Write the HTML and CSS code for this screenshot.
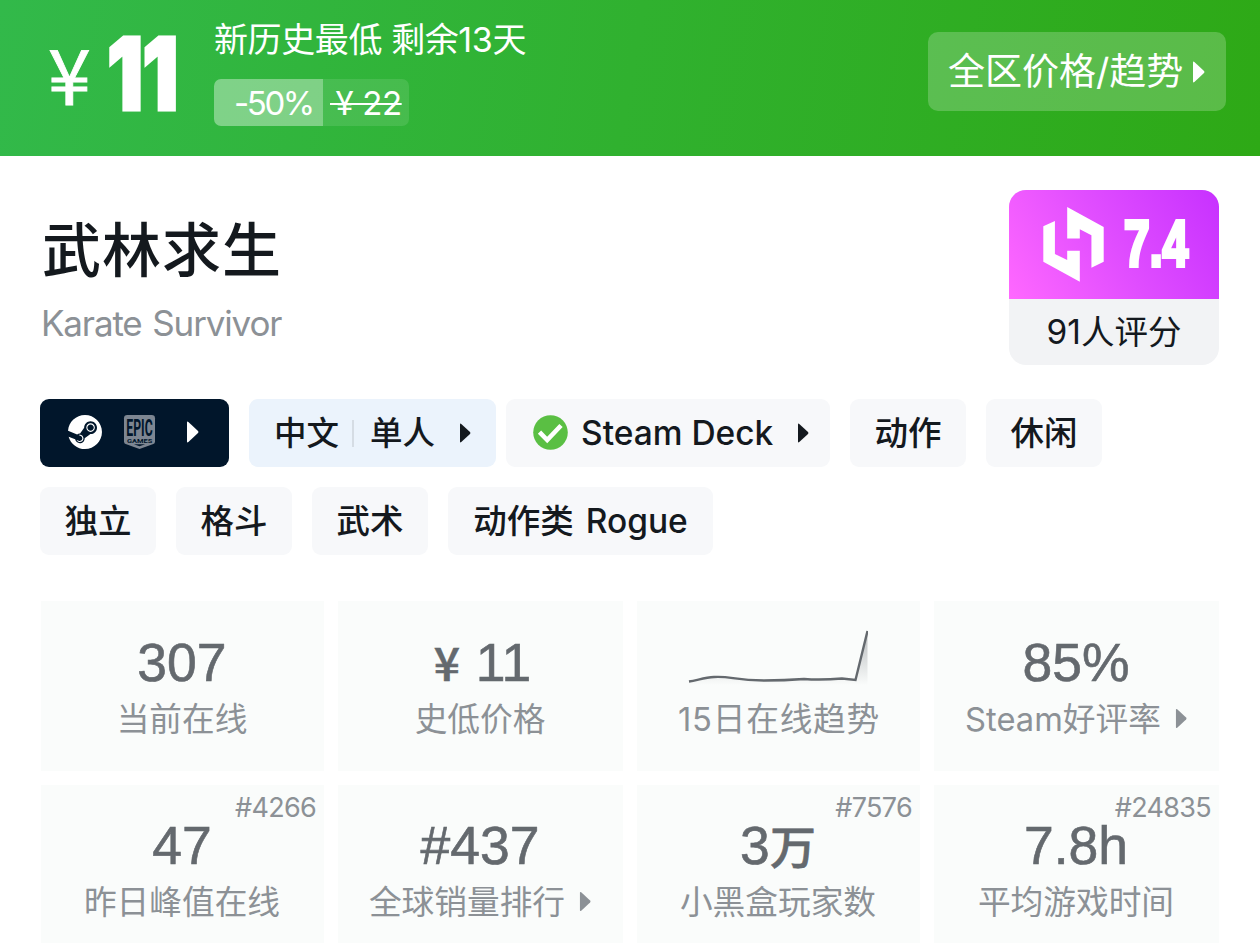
FILE: index.html
```html
<!DOCTYPE html>
<html lang="zh-CN">
<head>
    <meta charset="UTF-8">
    <meta name="viewport" content="width=device-width, initial-scale=1.0">
    <title>武林求生 Karate Survivor</title>
    <link rel="stylesheet" href="styles.css">
</head>
<body>
    <!-- Price bar -->
    <div class="price-bar">
        <span class="currency">¥</span>
        <span class="price"><span class="heavy">11</span></span>
        <div class="deal">
            <div class="deal-text">新历史最低 剩余13天</div>
            <div class="deal-tags">
                <span class="discount">-50%</span>
                <span class="old-price"><s>&thinsp;¥ 22</s></span>
            </div>
        </div>
        <div class="trend-button">
            <span>全区价格/趋势</span>
            <svg class="arrow" width="13" height="22" viewBox="0 0 13 22"><path d="M1 1.5Q1 0 2.4 1L12 10Q13 11 12 12L2.4 21Q1 22 1 20.5z" fill="currentColor"/></svg>
        </div>
    </div>

    <!-- Title and score -->
    <div class="heading">
        <div class="names">
            <h1>武林求生</h1>
            <p>Karate Survivor</p>
        </div>
        <div class="score">
            <div class="score-top">
                <svg class="score-logo" width="61" height="75" viewBox="160 80 182 226">
                    <path d="M160 138L195 122V222L232 240V212H270V305L160 245zM232 80L342 140V245L305 263V165L270 147V175H232z" fill="#fff"/>
                </svg>
                <span class="score-value"><span class="heavy">7.4</span></span>
            </div>
            <div class="score-count">91人评分</div>
        </div>
    </div>

    <!-- Tags -->
    <div class="tags">
        <div class="tag-row">
            <div class="tag store">
                <svg width="34" height="34" viewBox="0 0 24 24"><path fill="#fff" d="M11.979 0C5.678 0 .511 4.86.022 11.037l6.432 2.658c.545-.371 1.203-.59 1.912-.59.063 0 .125.004.188.006l2.861-4.142V8.91c0-2.495 2.028-4.524 4.524-4.524 2.494 0 4.524 2.031 4.524 4.527s-2.03 4.525-4.524 4.525h-.105l-4.076 2.911c0 .052.004.105.004.159 0 1.875-1.515 3.396-3.39 3.396-1.635 0-3.016-1.173-3.331-2.727L.436 15.27C1.862 20.307 6.486 24 11.979 24c6.627 0 11.999-5.373 11.999-12S18.605 0 11.979 0zM7.54 18.21l-1.473-.61c.262.543.714.999 1.314 1.25 1.297.539 2.793-.076 3.332-1.375.263-.63.264-1.319.005-1.949s-.75-1.121-1.377-1.383c-.624-.26-1.29-.249-1.878-.03l1.523.63c.956.4 1.409 1.5 1.009 2.455-.397.957-1.497 1.41-2.454 1.012H7.54zm11.415-9.303c0-1.662-1.353-3.015-3.015-3.015-1.665 0-3.015 1.353-3.015 3.015 0 1.665 1.35 3.015 3.015 3.015 1.663 0 3.015-1.35 3.015-3.015zm-5.273-.005c0-1.252 1.013-2.266 2.265-2.266 1.249 0 2.266 1.014 2.266 2.266 0 1.251-1.017 2.265-2.266 2.265-1.253 0-2.265-1.014-2.265-2.265z"/></svg>
                <svg class="epic" width="31" height="34" viewBox="0 0 94 103">
                    <path d="M10 0H84Q94 0 94 10V80Q94 86 89 88L47 103L5 88Q0 86 0 80V10Q0 0 10 0z" fill="#7d8692"/>
                    <text class="epic-name" x="7" y="63" textLength="80" lengthAdjust="spacingAndGlyphs">EPIC</text>
                    <text class="epic-sub" x="9" y="84" textLength="77" lengthAdjust="spacingAndGlyphs">GAMES</text>
                    <path d="M30 89H64L47 95z" fill="#01162b"/>
                </svg>
                <svg class="arrow" width="13" height="22" viewBox="0 0 13 22"><path d="M1 1.5Q1 0 2.4 1L12 10Q13 11 12 12L2.4 21Q1 22 1 20.5z" fill="currentColor"/></svg>
            </div>
            <div class="tag language">
                <span>中文</span>
                <i class="divider"></i>
                <span>单人</span>
                <svg class="arrow" width="12" height="20" viewBox="0 0 13 22"><path d="M1 1.5Q1 0 2.4 1L12 10Q13 11 12 12L2.4 21Q1 22 1 20.5z" fill="currentColor"/></svg>
            </div>
            <div class="tag deck">
                <svg width="35" height="35" viewBox="0 0 35 35">
                    <circle cx="17.5" cy="17.5" r="17.3" fill="#5abf43"/>
                    <path d="M6.5 17.2L14.2 25L28 10.5" fill="none" stroke="#fff" stroke-width="4.6"/>
                </svg>
                <span>Steam Deck</span>
                <svg class="arrow" width="12" height="20" viewBox="0 0 13 22"><path d="M1 1.5Q1 0 2.4 1L12 10Q13 11 12 12L2.4 21Q1 22 1 20.5z" fill="currentColor"/></svg>
            </div>
            <div class="tag">动作</div>
            <div class="tag">休闲</div>
        </div>
        <div class="tag-row">
            <div class="tag">独立</div>
            <div class="tag">格斗</div>
            <div class="tag">武术</div>
            <div class="tag rogue">动作类 Rogue</div>
        </div>
    </div>

    <!-- Stats -->
    <div class="stats">
        <div class="stat">
            <div class="value">307</div>
            <div class="label">当前在线</div>
        </div>
        <div class="stat">
            <div class="value lowest"><span class="unit">¥</span> 11</div>
            <div class="label">史低价格</div>
        </div>
        <div class="stat">
            <svg class="chart" width="180" height="56" viewBox="0 0 180 56">
                <defs>
                    <linearGradient id="fade" x1="0" y1="0" x2="0" y2="1">
                        <stop offset="0" stop-color="#64696e" stop-opacity="0.45"/>
                        <stop offset="1" stop-color="#64696e" stop-opacity="0"/>
                    </linearGradient>
                </defs>
                <path d="M1 52.5C10 51 17 48.5 26 48C43 47 45 51 76 51.5C95 51.5 103 51 116 50C130 51 142 50.5 154 49.5L167.5 51L179.5 2V56H1z" fill="url(#fade)"/>
                <path d="M1 52.5C10 51 17 48.5 26 48C43 47 45 51 76 51.5C95 51.5 103 51 116 50C130 51 142 50.5 154 49.5L167.5 51L179.5 2" fill="none" stroke="#64696e" stroke-width="2.4"/>
            </svg>
            <div class="label trend">15日在线趋势</div>
        </div>
        <div class="stat">
            <div class="value">85%</div>
            <div class="label">Steam好评率<svg class="arrow" width="12" height="21" viewBox="0 0 13 22"><path d="M1 1.5Q1 0 2.4 1L12 10Q13 11 12 12L2.4 21Q1 22 1 20.5z" fill="currentColor"/></svg></div>
        </div>
        <div class="stat">
            <span class="rank">#4266</span>
            <div class="value">47</div>
            <div class="label">昨日峰值在线</div>
        </div>
        <div class="stat">
            <div class="value">#437</div>
            <div class="label">全球销量排行<svg class="arrow" width="12" height="21" viewBox="0 0 13 22"><path d="M1 1.5Q1 0 2.4 1L12 10Q13 11 12 12L2.4 21Q1 22 1 20.5z" fill="currentColor"/></svg></div>
        </div>
        <div class="stat">
            <span class="rank">#7576</span>
            <div class="value">3<span class="unit">万</span></div>
            <div class="label">小黑盒玩家数</div>
        </div>
        <div class="stat">
            <span class="rank">#24835</span>
            <div class="value">7.8h</div>
            <div class="label">平均游戏时间</div>
        </div>
    </div>
</body>
</html>
```
FILE: styles.css
```css
* {
    box-sizing: border-box;
}
body {
    margin: 0;
    height: 943px;
    overflow: hidden;
    background-color: #fff;
    color: #14191e;
    font-family: Inter, "Noto Sans CJK SC", sans-serif;
}
svg {
    display: block;
    flex: none;
}

/* Price bar */
.price-bar {
    display: flex;
    height: 156px;
    padding: 0 34px 0 48px;
    color: #fff;
    background: linear-gradient(100deg, #32b94a, #30b12f 50%, #2ea916);
    white-space: nowrap;
}
.currency {
    width: 58px;
    margin-top: 24px;
    font-family: "Noto Sans CJK SC", sans-serif;
    font-size: 77px;
    line-height: 96px;
    -webkit-text-stroke: 0.8px #fff;
}
.price {
    width: 108px;
    margin-top: 14px;
    font-size: 100px;
    line-height: 120px;
}
.heavy {
    display: inline-block;
    font-weight: 900;
    transform: scaleX(0.8);
    transform-origin: left;
    -webkit-text-stroke: 3px #fff;
}
.price .heavy {
    margin-left: 1px;
    letter-spacing: -1px;
}
.deal-text {
    margin-top: 16px;
    font-size: 34px;
    line-height: 48px;
    letter-spacing: -0.4px;
}
.deal-tags {
    display: flex;
    margin-top: 15px;
    height: 47px;
    font-size: 33px;
    line-height: 48px;
}
.discount {
    width: 109px;
    padding-left: 20px;
    border-radius: 7px 0 0 7px;
    background-color: rgba(255, 255, 255, 0.38);
    letter-spacing: -2.4px;
}
.old-price {
    width: 86px;
    padding-left: 7px;
    border-radius: 0 7px 7px 0;
    background-color: rgba(255, 255, 255, 0.11);
    letter-spacing: -0.4px;
}
.old-price s {
    text-decoration-thickness: 2px;
}
.trend-button {
    display: flex;
    align-items: center;
    width: 298px;
    height: 79px;
    margin-top: 32px;
    margin-left: auto;
    padding-left: 20px;
    border-radius: 10px;
    background-color: rgba(255, 255, 255, 0.21);
    font-size: 37px;
}
.trend-button span {
    margin-top: -5px;
}
.trend-button .arrow {
    margin-left: 9px;
}

/* Title and score */
.heading {
    display: flex;
    justify-content: space-between;
    height: 243px;
    padding: 34px 41px 0;
}
.names h1 {
    margin: 17px 0 0 1px;
    font-size: 59px;
    font-weight: 500;
    line-height: 88px;
    letter-spacing: 1px;
}
.names p {
    margin: 3px 0 0;
    color: #8c9196;
    font-size: 35px;
    line-height: 50px;
    letter-spacing: -1.15px;
    word-spacing: 2px;
}
.score {
    width: 210px;
    height: 175px;
    border-radius: 17px;
    background-color: #f2f3f5;
    overflow: hidden;
}
.score-top {
    display: flex;
    height: 109px;
    padding-left: 34px;
    background: linear-gradient(60deg, #ff68ff, #e04dff 50%, #c731ff);
}
.score-logo {
    margin-top: 17px;
}
.score-value {
    margin: 13px 0 0 20px;
    color: #fff;
    font-size: 64px;
    line-height: 80px;
}
.score-value .heavy {
    font-family: "Liberation Sans", sans-serif;
    transform: scaleX(0.72);
    -webkit-text-stroke: 4px #fff;
}
.score-count {
    font-size: 33.5px;
    line-height: 66px;
    text-align: center;
}

/* Tags */
.tags {
    padding: 0 40px;
}
.tag-row {
    display: flex;
    gap: 20px;
    margin-bottom: 20px;
}
.tag {
    display: flex;
    align-items: center;
    justify-content: center;
    width: 116px;
    height: 68px;
    padding-bottom: 6px;
    border-radius: 9px;
    background-color: #f7f8fa;
    font-size: 33.5px;
    font-weight: 500;
    white-space: nowrap;
}
.store {
    justify-content: flex-start;
    width: 189px;
    padding: 0 0 2px 28px;
    color: #fff;
    background-color: #01162b;
}
.epic {
    margin-left: 22px;
    overflow: visible;
}
.epic text {
    fill: #01162b;
    font-family: Roboto, sans-serif;
    font-weight: 700;
}
.epic .epic-name {
    font-size: 74px;
}
.epic .epic-sub {
    font-size: 16px;
}
.store .arrow {
    margin-left: 31px;
}
.language {
    justify-content: flex-start;
    width: 247px;
    padding: 0 0 0 25px;
    background-color: #ebf3fc;
    font-size: 32.5px;
}
.language span {
    margin-top: -6px;
}
.divider {
    width: 2px;
    height: 27px;
    margin: 0 16px 0 13px;
    background-color: #d5dce4;
}
.language .arrow {
    margin-left: 24px;
}
.deck {
    justify-content: flex-start;
    width: 324px;
    margin-left: -10px;
    padding: 0 0 1px 27px;
}
.deck span {
    margin-left: 13px;
}
.deck .arrow {
    margin-left: 24px;
}
.rogue {
    width: 265px;
    word-spacing: 3px;
}

/* Stats */
.stats {
    display: grid;
    grid-template-columns: 283px 285px 283px 285px;
    grid-auto-rows: 170px;
    gap: 14px;
    padding: 26px 41px 0;
}
.stat {
    position: relative;
    padding: 34px 1px 0 0;
    background-color: #fafcfb;
    text-align: center;
    white-space: nowrap;
}
.stat:nth-child(n+5) {
    padding-top: 33px;
}
.value {
    height: 56px;
    color: #64696e;
    font-family: "Liberation Sans", "Noto Sans CJK SC", sans-serif;
    font-size: 53.5px;
    line-height: 56px;
    -webkit-text-stroke: 0.6px #64696e;
}
.lowest {
    padding-left: 5px;
    word-spacing: 1px;
}
.unit {
    font-family: "Noto Sans CJK SC", sans-serif;
    font-size: 46px;
    font-weight: 500;
    line-height: 1;
}
.chart {
    height: 56px;
    margin: -6px auto 6px;
}
.label {
    display: flex;
    align-items: center;
    justify-content: center;
    height: 50px;
    color: #8c9196;
    font-size: 32.7px;
}
.trend {
    padding-left: 2px;
    letter-spacing: 0.8px;
}
.label .arrow {
    margin: 5px 0 0 14px;
}
.rank {
    position: absolute;
    top: 4px;
    right: 8px;
    color: #8c9196;
    font-size: 27px;
    line-height: 37px;
    letter-spacing: -0.7px;
}
```
